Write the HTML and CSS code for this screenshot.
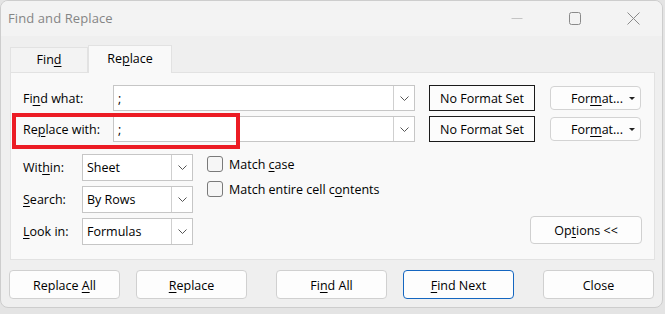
FILE: index.html
```html
<!DOCTYPE html>
<html>
<head>
<meta charset="utf-8">
<link rel="stylesheet" href="styles.css">
</head>
<body>
<div class="window">
  <div class="titlebar">
    <span class="title">Find and Replace</span>
    <div class="controls">
      <span class="ctl"><svg width="12" height="12" viewBox="0 0 12 12"><path d="M0.5 6.5H11.5" stroke="#c4c4c4" stroke-width="1" fill="none"/></svg></span>
      <span class="ctl"><svg width="12" height="13" viewBox="0 0 12 13"><rect x="0.5" y="0.5" width="11" height="12" rx="2" stroke="#8a8a8a" stroke-width="1" fill="none"/></svg></span>
      <span class="ctl"><svg width="13" height="13" viewBox="0 0 13 13"><path d="M0.5 0.5L12.5 12.5M12.5 0.5L0.5 12.5" stroke="#8a8a8a" stroke-width="1" fill="none"/></svg></span>
    </div>
  </div>
  <div class="content">
    <div class="tabs">
      <div class="tab"><span>Fin<u>d</u></span></div>
      <div class="tab active"><span>Re<u>p</u>lace</span></div>
    </div>
    <div class="panel">
      <div class="row">
        <span class="label">Fi<u>n</u>d what:</span>
        <div class="combo"><span class="value">;</span><span class="drop"><svg width="9" height="5" viewBox="0 0 9 5"><path d="M0.5 0.5L4.5 4.5L8.5 0.5" stroke="#555" fill="none"/></svg></span></div>
        <div class="noformat"><span>No Format Set</span></div>
        <div class="fmtbtn"><span>For<u>m</u>at...</span><span class="tri"></span></div>
      </div>
      <div class="row row2">
        <span class="label">Re<u>p</u>lace with:</span>
        <div class="combo"><span class="value">;</span><span class="drop"><svg width="9" height="5" viewBox="0 0 9 5"><path d="M0.5 0.5L4.5 4.5L8.5 0.5" stroke="#555" fill="none"/></svg></span></div>
        <div class="noformat"><span>No Format Set</span></div>
        <div class="fmtbtn"><span>For<u>m</u>at...</span><span class="tri"></span></div>
      </div>
      <div class="options">
        <div class="selects">
          <div class="srow"><span class="slabel">Wit<u>h</u>in:</span><div class="select"><span class="value">Sheet</span><span class="drop"><svg width="9" height="5" viewBox="0 0 9 5"><path d="M0.5 0.5L4.5 4.5L8.5 0.5" stroke="#555" fill="none"/></svg></span></div></div>
          <div class="srow"><span class="slabel"><u>S</u>earch:</span><div class="select"><span class="value">By Rows</span><span class="drop"><svg width="9" height="5" viewBox="0 0 9 5"><path d="M0.5 0.5L4.5 4.5L8.5 0.5" stroke="#555" fill="none"/></svg></span></div></div>
          <div class="srow"><span class="slabel"><u>L</u>ook in:</span><div class="select"><span class="value">Formulas</span><span class="drop"><svg width="9" height="5" viewBox="0 0 9 5"><path d="M0.5 0.5L4.5 4.5L8.5 0.5" stroke="#555" fill="none"/></svg></span></div></div>
        </div>
        <div class="checks">
          <div class="crow"><span class="box"></span><span>Match <u>c</u>ase</span></div>
          <div class="crow"><span class="box"></span><span>Match entire cell c<u>o</u>ntents</span></div>
        </div>
        <div class="btn optbtn"><span>Op<u>t</u>ions &lt;&lt;</span></div>
      </div>
    </div>
    <div class="actions">
      <div class="btn"><span>Replace <u>A</u>ll</span></div>
      <div class="btn gap-s"><span><u>R</u>eplace</span></div>
      <div class="btn gap-l"><span>Fi<u>n</u>d All</span></div>
      <div class="btn gap-s default"><span><u>F</u>ind Next</span></div>
      <div class="btn gap-l"><span>Close</span></div>
    </div>
  </div>
  <div class="highlight"></div>
</div>
</body>
</html>
```

FILE: styles.css
```css
* { box-sizing: border-box; }
html, body { margin: 0; padding: 0; }
body {
  width: 665px;
  height: 314px;
  background: #e4e4e4;
  font-family: "Open Sans", "Noto Sans", sans-serif;
  font-size: 12px;
  color: #000;
  overflow: hidden;
}
u { text-decoration: underline; text-underline-offset: 2px; text-decoration-thickness: 1px; }
.window {
  position: relative;
  width: 663px;
  height: 308px;
  background: #efefef;
  border: 1px solid #cdcdcd;
  border-radius: 8px;
  overflow: hidden;
}
.titlebar {
  height: 35px;
  background: #f3f3f3;
  display: flex;
  align-items: center;
  padding-left: 7px;
  padding-bottom: 1px;
}
.title {
  font-size: 13px;
  color: #858585;
  letter-spacing: 0.1px;
}
.controls {
  margin-left: auto;
  display: flex;
  height: 34px;
}
.ctl {
  width: 58px;
  display: flex;
  align-items: center;
  justify-content: center;
}
.content {
  padding-top: 9px;
  padding-left: 9px;
}
.tabs {
  display: flex;
  align-items: flex-end;
  height: 27px;
  position: relative;
  z-index: 1;
}
.tab {
  height: 25px;
  width: 78px;
  background: #f3f3f3;
  border: 1px solid #e2e2e2;
  border-bottom: none;
  display: flex;
  align-items: center;
  justify-content: center;
  font-size: 12.5px;
  padding-bottom: 1px;
}
.tab.active {
  width: 84px;
  height: 28px;
  background: #f9f9f9;
  margin-bottom: -1px;
  padding-bottom: 3px;
}
.panel {
  width: 645px;
  height: 188px;
  background: #f9f9f9;
  border: 1px solid #e2e2e2;
  padding: 12px 12px 0 12px;
}
.row {
  display: flex;
  align-items: center;
  height: 26px;
}
.row2 { margin-top: 5px; }
.label {
  width: 90px;
  font-size: 12.5px;
}
.combo, .select {
  display: flex;
  align-items: stretch;
  background: #fff;
  border: 1px solid #c6c6c6;
}
.combo { width: 302px; height: 26px; }
.value {
  flex: 1;
  display: flex;
  align-items: center;
  padding-left: 4px;
  font-size: 12.5px;
}
.drop {
  width: 21px;
  border-left: 1px solid #cfcfcf;
  display: flex;
  align-items: center;
  justify-content: center;
}
.noformat {
  margin-left: 14px;
  width: 106px;
  height: 26px;
  border: 1px solid #1a1a1a;
  background: #fcfcfc;
  display: flex;
  align-items: center;
  justify-content: center;
  font-size: 12.5px;
}
.fmtbtn {
  margin-left: 15px;
  width: 91px;
  height: 24px;
  border: 1px solid #d3d3d3;
  border-radius: 4px;
  background: #fdfdfd;
  display: flex;
  align-items: center;
  padding-left: 20px;
  font-size: 12.5px;
}
.tri {
  margin-left: auto;
  margin-right: 5px;
  width: 0;
  height: 0;
  border-left: 3px solid transparent;
  border-right: 3px solid transparent;
  border-top: 3px solid #222;
}
.options {
  display: flex;
  margin-top: 12px;
}
.selects {
  display: flex;
  flex-direction: column;
  gap: 5px;
}
.srow {
  display: flex;
  align-items: center;
  height: 27px;
}
.slabel {
  width: 59px;
  font-size: 12.5px;
}
.select { width: 111px; height: 27px; }
.checks {
  margin-left: 14px;
  padding-top: 2px;
  display: flex;
  flex-direction: column;
  gap: 9px;
}
.crow {
  display: flex;
  align-items: center;
  height: 16px;
  font-size: 12.5px;
}
.box {
  width: 16px;
  height: 16px;
  border: 1px solid #7a7a7a;
  border-radius: 3px;
  background: #f6f6f6;
  margin-right: 6px;
}
.btn {
  width: 111px;
  height: 29px;
  border: 1px solid #d0d0d0;
  border-radius: 4px;
  background: #fdfdfd;
  display: flex;
  align-items: center;
  justify-content: center;
  font-size: 12.5px;
  padding-top: 1px;
}
.optbtn {
  margin-left: auto;
  align-self: flex-end;
  width: 112px;
  height: 28px;
  margin-bottom: 1px;
}
.actions {
  display: flex;
  margin-top: 10px;
  margin-left: -1px;
}
.gap-s { margin-left: 16px; }
.gap-l { margin-left: 29px; }
.btn.default { border-color: #1466c0; }
.highlight {
  position: absolute;
  left: 11px;
  top: 112px;
  width: 228px;
  height: 36px;
  border: 4px solid #ec1c24;
}
```
